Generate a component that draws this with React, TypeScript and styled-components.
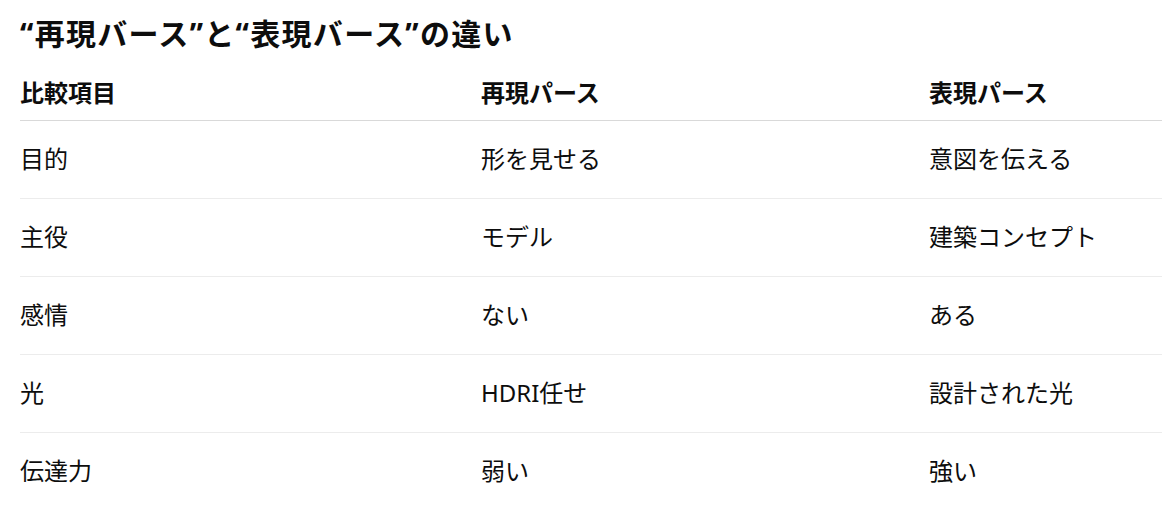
import React from "react";
import styled, { createGlobalStyle } from "styled-components";

const GlobalStyle = createGlobalStyle`
  html, body {
    margin: 0;
    padding: 0;
    background: #ffffff;
  }
  body {
    font-family: "Noto Sans", "Noto Sans CJK JP", sans-serif;
    color: #0d0d0d;
  }
`;

const rows = [
  ["目的", "形を見せる", "意図を伝える"],
  ["主役", "モデル", "建築コンセプト"],
  ["感情", "ない", "ある"],
  ["光", "HDRI任せ", "設計された光"],
  ["伝達力", "弱い", "強い"],
];

function App() {
  return (
    <>
      <GlobalStyle />
      <Page>
        <Title>“再現バース”と“表現バース”の違い</Title>
        <Table>
          <colgroup>
            <col style={{ width: 461 }} />
            <col style={{ width: 448 }} />
            <col />
          </colgroup>
          <thead>
            <tr>
              <HeadCell>比較項目</HeadCell>
              <HeadCell>再現パース</HeadCell>
              <HeadCell>表現パース</HeadCell>
            </tr>
          </thead>
          <tbody>
            {rows.map((row, i) => (
              <BodyRow key={i}>
                {row.map((cell, j) => (
                  <Cell key={j}>{cell}</Cell>
                ))}
              </BodyRow>
            ))}
          </tbody>
        </Table>
      </Page>
    </>
  );
}

const Page = styled.div`
  padding: 14px 0 0 20px;
`;

const Title = styled.h2`
  margin: 0;
  font-size: 30px;
  line-height: 40px;
  font-weight: 700;
  letter-spacing: 1.3px;
`;

const Table = styled.table`
  margin-top: 12px;
  width: 100%;
  border-collapse: collapse;
  table-layout: fixed;
`;

const HeadCell = styled.th`
  text-align: left;
  font-size: 24px;
  line-height: 32px;
  font-weight: 700;
  padding: 11px 0;
  border-bottom: 1px solid #d9d9d9;
`;

const BodyRow = styled.tr`
  & + & td {
    border-top: 1px solid #ececec;
  }
`;

const Cell = styled.td`
  font-size: 24px;
  line-height: 34px;
  padding: 21px 0 22px;
  white-space: nowrap;
`;

export default App;
